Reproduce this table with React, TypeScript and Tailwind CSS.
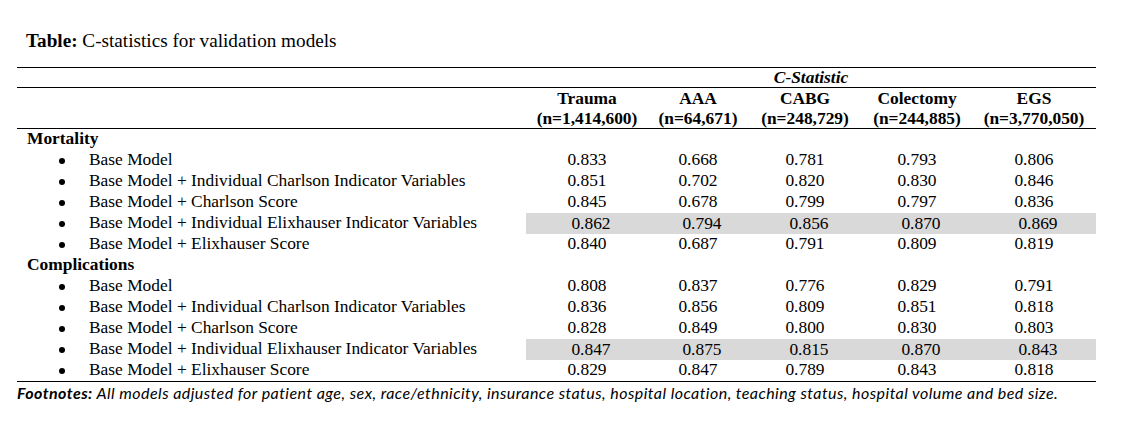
import React from "react";

type Row = { label: string; vals: string[]; hl?: boolean };

const mortality: Row[] = [
  { label: "Base Model", vals: ["0.833", "0.668", "0.781", "0.793", "0.806"] },
  { label: "Base Model + Individual Charlson Indicator Variables", vals: ["0.851", "0.702", "0.820", "0.830", "0.846"] },
  { label: "Base Model + Charlson Score", vals: ["0.845", "0.678", "0.799", "0.797", "0.836"] },
  { label: "Base Model + Individual Elixhauser Indicator Variables", vals: ["0.862", "0.794", "0.856", "0.870", "0.869"], hl: true },
  { label: "Base Model + Elixhauser Score", vals: ["0.840", "0.687", "0.791", "0.809", "0.819"] },
];

const complications: Row[] = [
  { label: "Base Model", vals: ["0.808", "0.837", "0.776", "0.829", "0.791"] },
  { label: "Base Model + Individual Charlson Indicator Variables", vals: ["0.836", "0.856", "0.809", "0.851", "0.818"] },
  { label: "Base Model + Charlson Score", vals: ["0.828", "0.849", "0.800", "0.830", "0.803"] },
  { label: "Base Model + Individual Elixhauser Indicator Variables", vals: ["0.847", "0.875", "0.815", "0.870", "0.843"], hl: true },
  { label: "Base Model + Elixhauser Score", vals: ["0.829", "0.847", "0.789", "0.843", "0.818"] },
];

const headers = [
  { name: "Trauma", n: "(n=1,414,600)" },
  { name: "AAA", n: "(n=64,671)" },
  { name: "CABG", n: "(n=248,729)" },
  { name: "Colectomy", n: "(n=244,885)" },
  { name: "EGS", n: "(n=3,770,050)" },
];

const COLS = "grid grid-cols-[122px_100px_114px_110px_124px]";

function DataRow({ row }: { row: Row }) {
  return (
    <div className="grid grid-cols-[509px_570px] h-[21px]">
      <div className="flex items-start h-[21px]">
        <span className="ml-[42px] mt-[8px] w-[6px] h-[6px] rounded-full bg-black"></span>
        <span className="ml-[24px] whitespace-nowrap leading-[19px]">{row.label}</span>
      </div>
      <div className={`${COLS} h-[21px] ${row.hl ? "bg-[#d9d9d9]" : ""}`}>
        {row.vals.map((v, i) => (
          <div
            key={i}
            className={`flex justify-center items-start leading-[19px] whitespace-nowrap ${row.hl ? "pl-[8px] pt-[1px]" : ""}`}
          >
            {v}
          </div>
        ))}
      </div>
    </div>
  );
}

function GroupLabel({ text }: { text: string }) {
  return (
    <div className="h-[21px] leading-[18px] pl-[10px] font-bold whitespace-nowrap">{text}</div>
  );
}

export default function App() {
  return (
    <div className="w-[1129px] h-[422px] bg-white text-black font-['Liberation_Serif',serif] overflow-hidden">
      <div className="pt-[30px] pl-[26px] text-[19.2px] leading-[22px] whitespace-nowrap">
        <span className="font-bold">Table:</span> C-statistics for validation models
      </div>
      <div className="ml-[17px] mt-[15px] w-[1079px] text-[17.4px]">
        <div className="border-t border-black"></div>
        <div className="grid grid-cols-[509px_570px] h-[19px]">
          <div></div>
          <div className="flex justify-center items-center font-bold italic leading-[19px]">C-Statistic</div>
        </div>
        <div className="border-t border-black"></div>
        <div className="grid grid-cols-[509px_570px] h-[40px]">
          <div></div>
          <div className={COLS}>
            {headers.map((h) => (
              <div key={h.name} className="flex flex-col items-center font-bold leading-[20px] whitespace-nowrap">
                <span>{h.name}</span>
                <span>{h.n}</span>
              </div>
            ))}
          </div>
        </div>
        <div className="border-t border-black"></div>
        <GroupLabel text="Mortality" />
        {mortality.map((r, i) => (
          <DataRow key={i} row={r} />
        ))}
        <GroupLabel text="Complications" />
        {complications.map((r, i) => (
          <DataRow key={i} row={r} />
        ))}
        <div className="border-t border-black"></div>
        <div className="h-[20px] leading-[21px] text-[16px] tracking-[0.45px] italic font-['Lato',sans-serif] whitespace-nowrap">
          <span className="font-bold">Footnotes:</span> All models adjusted for patient age, sex, race/ethnicity, insurance status, hospital location, teaching status, hospital volume and bed size.
        </div>
      </div>
    </div>
  );
}
